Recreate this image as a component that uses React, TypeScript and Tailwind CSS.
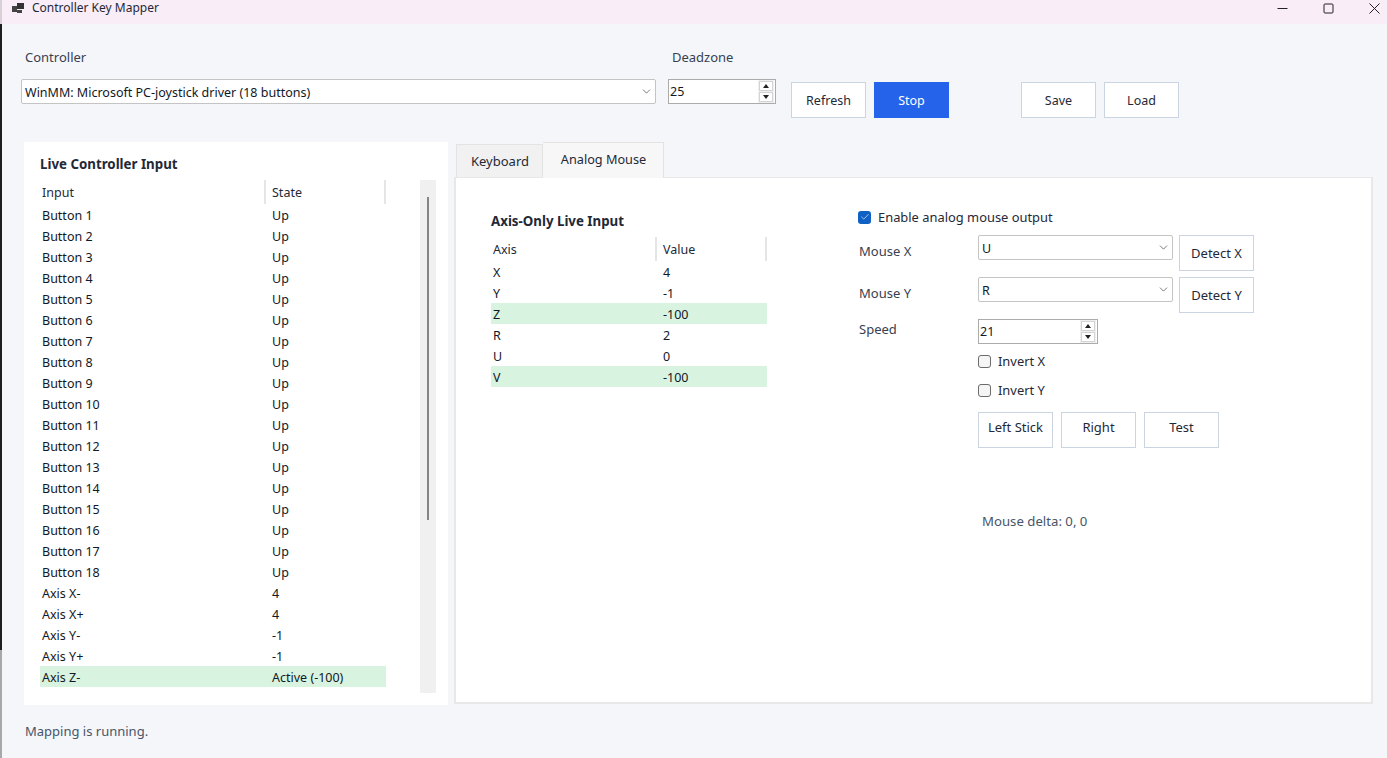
import { ChevronDown, Check } from "lucide-react";
import type { ReactNode } from "react";

const inputRows: [string, string, boolean?][] = [
  ...Array.from({ length: 18 }, (_, i): [string, string] => [`Button ${i + 1}`, "Up"]),
  ["Axis X-", "4"],
  ["Axis X+", "4"],
  ["Axis Y-", "-1"],
  ["Axis Y+", "-1"],
  ["Axis Z-", "Active (-100)", true],
];

const axisRows: [string, string, boolean?][] = [
  ["X", "4"],
  ["Y", "-1"],
  ["Z", "-100", true],
  ["R", "2"],
  ["U", "0"],
  ["V", "-100", true],
];

function Combo({ value, className }: { value: string; className: string }) {
  return (
    <div className={`flex h-[25px] items-center justify-between rounded-[2px] border border-[#c4c4c4] bg-white pl-[3px] pr-[1px] text-[#111827] ${className}`}>
      <span className="pt-[4px]">{value}</span>
      <ChevronDown size={13} strokeWidth={1.3} className="mr-[1px] -mt-[1px] text-[#444]" />
    </div>
  );
}

function Spinner({ value, className }: { value: string; className: string }) {
  return (
    <div className={`flex h-[25px] items-center justify-between border border-[#ababab] bg-white pl-[1px] pr-[1px] text-[#111827] ${className}`}>
      <span className="mt-[2px]">{value}</span>
      <div className="flex h-[23px] w-[16px] flex-col gap-[1px] bg-[#f0f0f0] p-[1px]">
        <div className="flex flex-1 items-center justify-center border border-[#d4d4d4] bg-white">
          <div className="h-0 w-0 border-x-[3px] border-b-[4px] border-x-transparent border-b-[#222]" />
        </div>
        <div className="flex flex-1 items-center justify-center border border-[#d4d4d4] bg-white">
          <div className="h-0 w-0 border-x-[3px] border-t-[4px] border-x-transparent border-t-[#222]" />
        </div>
      </div>
    </div>
  );
}

function Btn({ children, primary, className = "", textClass = "mt-[2px]" }: { children: ReactNode; primary?: boolean; className?: string; textClass?: string }) {
  return (
    <button
      className={`flex h-[36px] w-[75px] items-center justify-center border ${className} ${
        primary ? "border-[#2563eb] bg-[#2563eb] text-white" : "border-[#cbd5e1] bg-white text-[#1f2937]"
      }`}
    >
      <span className={textClass}>{children}</span>
    </button>
  );
}

function Table({ head, rows, width, firstCol }: { head: [string, string]; rows: [string, string, boolean?][]; width: string; firstCol: string }) {
  return (
    <div className={width}>
      <div className="flex h-[24px] text-[#1f2937]">
        <div className={`flex items-center border-r-2 border-[#e5e5e5] pt-[2px] pl-[2px] ${firstCol}`}>{head[0]}</div>
        <div className="flex flex-1 items-center border-r-2 border-[#e5e5e5] pt-[2px] pl-[6px]">{head[1]}</div>
      </div>
      {rows.map(([a, b, active]) => (
        <div key={a} className={`flex h-[21px] items-center pt-[4px] text-[#111827] ${active ? "bg-[#d9f3e1]" : ""}`}>
          <div className={`pl-[2px] ${firstCol}`}>{a}</div>
          <div className="flex-1 pl-[6px]">{b}</div>
        </div>
      ))}
    </div>
  );
}

function CheckRow({ label, checked }: { label: string; checked?: boolean }) {
  return (
    <div className="flex h-[18px] items-center gap-[7px] text-[12.9px] text-[#1f2937]">
      {checked ? (
        <div className="flex h-[13px] w-[13px] items-center justify-center rounded-[3px] bg-[#0f62c4]">
          <Check size={10} strokeWidth={1.5} className="text-white" />
        </div>
      ) : (
        <div className="h-[13px] w-[13px] rounded-[3px] border border-[#6b6b6b] bg-[#f5f5f5]" />
      )}
      <span className="mt-[1px]">{label}</span>
    </div>
  );
}

export default function App() {
  return (
    <div className="flex h-[758px] overflow-hidden bg-[#f5f6fa] text-[12.5px] font-['Noto_Sans',sans-serif]">
      <div className="flex w-[2px] shrink-0 flex-col">
        <div className="h-[24px] bg-[#d8d0d6]" />
        <div className="flex-1 bg-[#1e1e1e]" />
        <div className="h-[108px] bg-[#a8a8a8]" />
      </div>
      <div className="flex flex-1 flex-col">
        <header className="flex h-[24px] shrink-0 items-start justify-between bg-[#f9edf7] pl-[10px] pr-[7px] text-[#1f2937]">
          <div className="flex items-start gap-[8px]">
            <svg width="12" height="11" viewBox="0 0 12 11" className="mt-[3px]">
              <rect x="0" y="3" width="5" height="6" fill="#444" />
              <rect x="5" y="0" width="7" height="6" fill="#333" />
              <rect x="5" y="7" width="5" height="3" fill="#444" />
            </svg>
            <span className="text-[12px] leading-[16px]">Controller Key Mapper</span>
          </div>
          <div className="mt-[3px] flex items-center gap-[35px]">
            <svg width="11" height="11" viewBox="0 0 11 11"><path d="M0.5 5.5H10.5" stroke="#222" /></svg>
            <svg width="11" height="11" viewBox="0 0 11 11"><rect x="1" y="1" width="9" height="9" rx="1" fill="none" stroke="#222" /></svg>
            <svg width="11" height="11" viewBox="0 0 11 11"><path d="M0.5 0.5L10.5 10.5M10.5 0.5L0.5 10.5" stroke="#222" /></svg>
          </div>
        </header>

        <section className="flex h-[118px] shrink-0 pl-[19px]">
          <div className="w-[647px] pt-[23px]">
            <div className="pl-[4px] text-[13px] leading-[20px] text-[#374151]">Controller</div>
            <Combo value="WinMM: Microsoft PC-joystick driver (18 buttons)" className="mt-[12px] w-[635px]" />
          </div>
          <div className="w-[123px] pt-[23px]">
            <div className="pl-[4px] text-[13px] leading-[20px] text-[#374151]">Deadzone</div>
            <Spinner value="25" className="mt-[12px] w-[108px]" />
          </div>
          <div className="flex gap-[8px] pt-[58px]">
            <Btn>Refresh</Btn>
            <Btn primary>Stop</Btn>
            <Btn className="ml-[64px]">Save</Btn>
            <Btn>Load</Btn>
          </div>
        </section>

        <main className="flex h-[563px] shrink-0 pl-[22px]">
          <div className="flex w-[424px] bg-white pl-[16px]">
            <div className="w-[346px]">
              <h2 className="mt-[12px] h-[26px] text-[13.3px] leading-[20px] font-bold text-[#1f2937]">Live Controller Input</h2>
              <Table head={["Input", "State"]} rows={inputRows} width="w-[346px]" firstCol="w-[226px]" />
            </div>
            <div className="mt-[38px] ml-[34px] flex h-[513px] w-[16px] justify-center bg-[#f0f0f0] pt-[17px]">
              <div className="h-[323px] w-[2px] bg-[#858585]" />
            </div>
          </div>

          <div className="ml-[6px] flex w-[919px] flex-col">
            <div className="flex h-[35px] items-end pl-[2px]">
              <div className="flex h-[33px] w-[87px] items-center justify-center border border-b-0 border-[#e3e3e3] bg-[#f1f1f1] pt-[2px] pl-[1px] text-[13px] text-[#1f2937]">Keyboard</div>
              <div className="relative z-10 -mb-[1px] flex h-[36px] w-[121px] items-center justify-center border border-b-0 border-l-0 border-[#e3e3e3] bg-[#f7f7f7] pb-[1px] pl-[1px] text-[12.7px] text-[#1f2937]">Analog Mouse</div>
            </div>
            <div className="flex h-[527px] border-2 border-t border-[#e8e8e8] bg-white pl-[35px]">
              <div className="w-[367px] pt-[33px]">
                <h3 className="h-[26px] text-[13.3px] leading-[20px] font-bold text-[#1f2937]">Axis-Only Live Input</h3>
                <Table head={["Axis", "Value"]} rows={axisRows} width="w-[276px]" firstCol="w-[166px]" />
              </div>
              <div className="pt-[30px]">
                <CheckRow label="Enable analog mouse output" checked />
                <div className="mt-[9px] grid grid-cols-[120px_195px_auto] items-start text-[#374151]">
                  <div className="mt-[7px] pl-[1px] text-[13px]">Mouse X</div>
                  <Combo value="U" className="" />
                  <Btn className="ml-[6px] text-[13px]">Detect X</Btn>
                  <div className="mt-[13px] pl-[1px] text-[13px]">Mouse Y</div>
                  <Combo value="R" className="mt-[6px]" />
                  <Btn className="mt-[6px] ml-[6px] text-[13px]">Detect Y</Btn>
                </div>
                <div className="mt-[6px] flex">
                  <div className="w-[120px] pl-[1px] text-[13px] leading-[20px] text-[#374151]">Speed</div>
                  <Spinner value="21" className="w-[120px]" />
                </div>
                <div className="ml-[120px]">
                  <div className="mt-[8px]"><CheckRow label="Invert X" /></div>
                  <div className="mt-[11px]"><CheckRow label="Invert Y" /></div>
                  <div className="mt-[13px] flex gap-[8px] text-[13px]">
                    <Btn textClass="mb-[4px]">Left Stick</Btn>
                    <Btn textClass="mb-[4px]">Right</Btn>
                    <Btn textClass="mb-[4px]">Test</Btn>
                  </div>
                  <div className="mt-[63px] pl-[4px] text-[13.2px] leading-[20px] text-[#475569]">Mouse delta: 0, 0</div>
                </div>
              </div>
            </div>
          </div>
        </main>

        <footer className="pt-[16px] pl-[23px] text-[13px] leading-[20px] text-[#475569]">Mapping is running.</footer>
      </div>
    </div>
  );
}
